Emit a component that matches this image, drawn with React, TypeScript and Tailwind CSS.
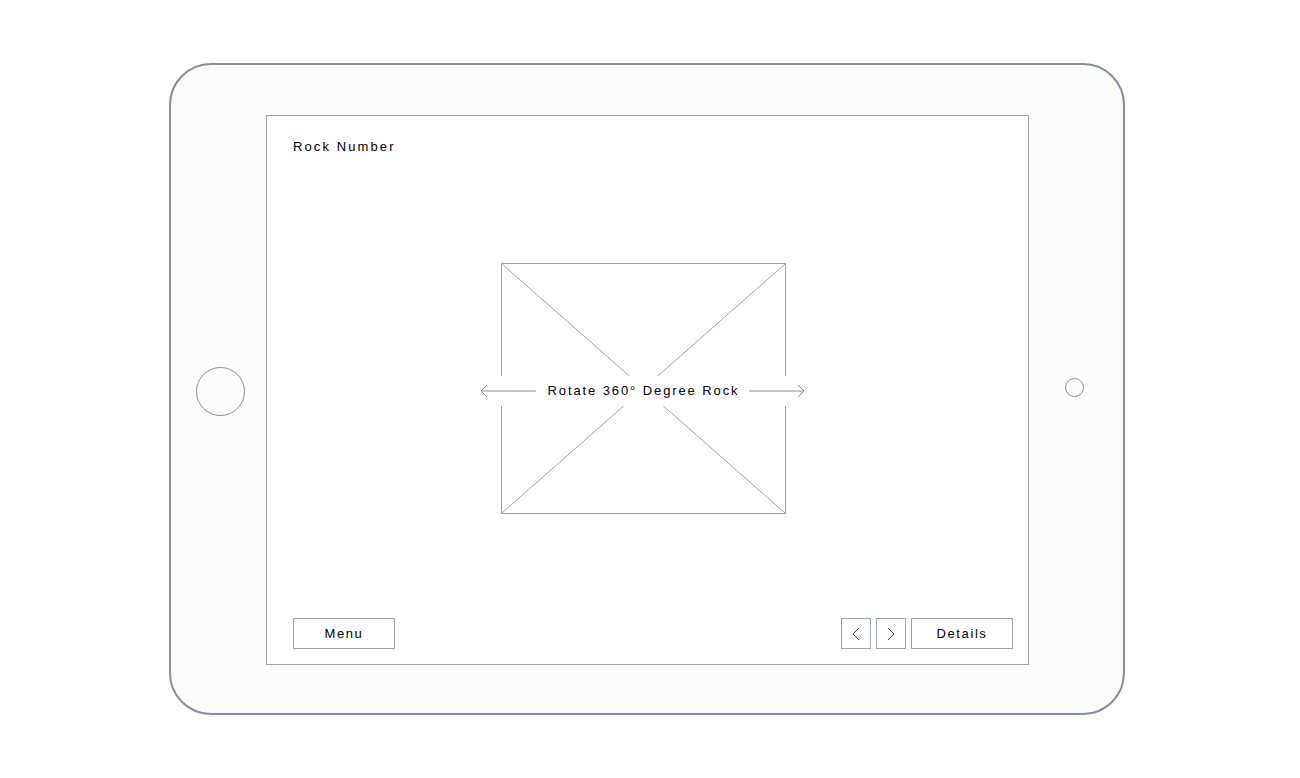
import React from "react";

const font = { fontFamily: '"Liberation Sans", Arial, sans-serif' };

function Chevron({ dir }: { dir: "left" | "right" }) {
  return (
    <svg width="8" height="14" viewBox="0 0 8 14" fill="none" aria-hidden>
      <polyline
        points={dir === "left" ? "7,1 1,7 7,13" : "1,1 7,7 1,13"}
        stroke="#3d414d"
        strokeWidth="1"
      />
    </svg>
  );
}

function Arrow({ dir }: { dir: "left" | "right" }) {
  return (
    <svg width="56" height="14" viewBox="0 0 56 14" fill="none" aria-hidden>
      {dir === "left" ? (
        <>
          <line x1="1" y1="7" x2="56" y2="7" stroke="#8990a8" />
          <polyline points="7,1 1,7 7,13" stroke="#8990a8" />
        </>
      ) : (
        <>
          <line x1="0" y1="7" x2="55" y2="7" stroke="#8990a8" />
          <polyline points="49,1 55,7 49,13" stroke="#8990a8" />
        </>
      )}
    </svg>
  );
}

export default function App() {
  return (
    <div className="min-h-[778px] w-[1300px] bg-white" style={font}>
      <div className="pl-[169px] pt-[63px]">
        {/* device frame */}
        <div className="flex h-[652px] w-[956px] items-stretch rounded-[42px] border-2 border-[#858ca6] bg-[#fcfcfc] pt-[50px] pb-[48px]">
          <div className="flex w-[95px] items-center justify-center pl-[4px]">
            <div className="mt-[2px] h-[49px] w-[49px] rounded-full border border-[#858ca6]" />
          </div>

          {/* screen */}
          <div className="flex w-[763px] flex-col border border-[#9ca1b7] bg-white pt-[23px] pr-[15px] pb-[15px] pl-[26px]">
            <div className="text-[13px] leading-[16px] tracking-[2.1px] text-black">Rock Number</div>

            <div className="flex flex-1 items-center justify-center pr-[20px]">
              <div className="relative mt-[4px]">
                <div className="h-[251px] w-[285px] border border-[#9ca1b7]">
                  <svg width="283" height="249" viewBox="0 0 283 249" className="block" aria-hidden>
                    <line x1="0" y1="0" x2="283" y2="249" stroke="#9ca1b7" strokeWidth="1" />
                    <line x1="283" y1="0" x2="0" y2="249" stroke="#9ca1b7" strokeWidth="1" />
                  </svg>
                </div>
                <div className="absolute top-[calc(50%+2px)] left-[-21px] flex h-[30px] w-[326px] -translate-y-1/2 items-center justify-between bg-white">
                  <Arrow dir="left" />
                  <span className="pl-[2px] text-[13px] tracking-[1.9px] text-black">Rotate 360° Degree Rock</span>
                  <Arrow dir="right" />
                </div>
              </div>
            </div>

            <div className="flex items-center justify-between">
              <button className="h-[31px] w-[102px] border border-[#9ca1b7] bg-white text-[13px] tracking-[1.6px] text-black">
                Menu
              </button>
              <div className="flex gap-[5px]">
                <button className="flex h-[31px] w-[30px] items-center justify-center border border-[#9ca1b7] bg-white">
                  <Chevron dir="left" />
                </button>
                <button className="flex h-[31px] w-[30px] items-center justify-center border border-[#9ca1b7] bg-white">
                  <Chevron dir="right" />
                </button>
                <button className="h-[31px] w-[102px] border border-[#9ca1b7] bg-white text-[13px] tracking-[1.6px] text-black">
                  Details
                </button>
              </div>
            </div>
          </div>

          <div className="flex w-[94px] items-center justify-center pr-[4px]">
            <div className="mb-[6px] h-[19px] w-[19px] rounded-full border border-[#858ca6]" />
          </div>
        </div>
      </div>
    </div>
  );
}
